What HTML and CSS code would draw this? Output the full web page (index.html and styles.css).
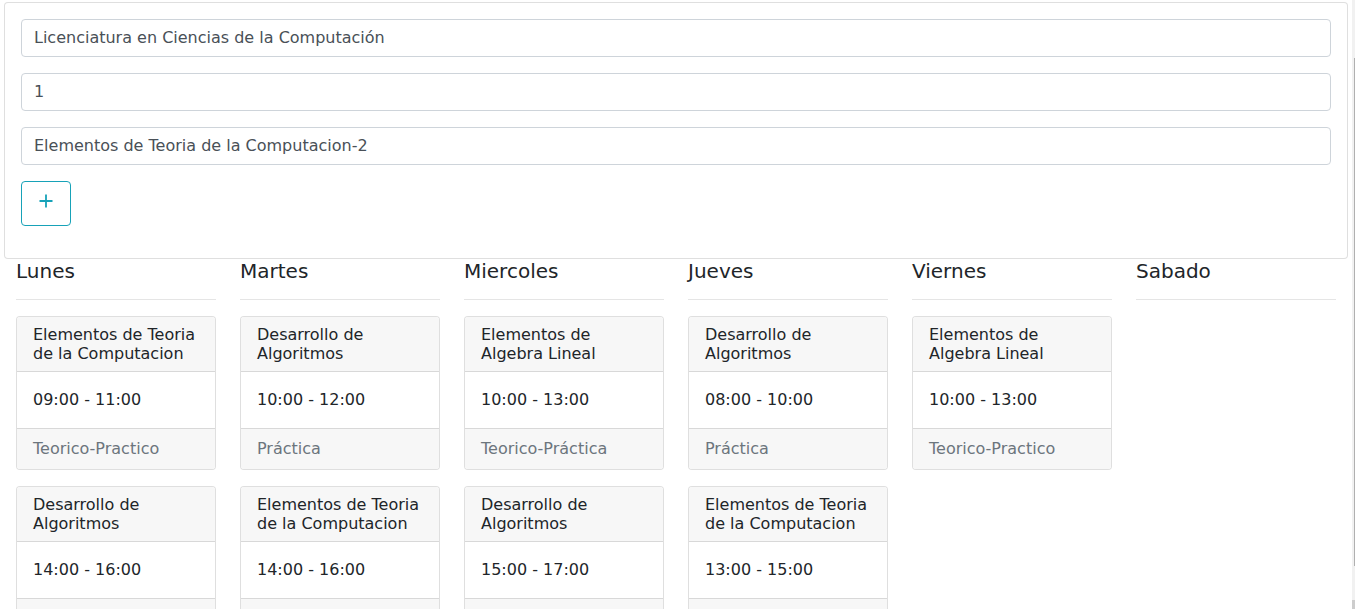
FILE: index.html
```html
<!DOCTYPE html>
<html lang="es">
<head>
<meta charset="utf-8">
<title>Horarios</title>
<link rel="stylesheet" href="styles.css">
</head>
<body>
<div class="page">
  <form class="form-card">
    <input class="field" type="text" value="Licenciatura en Ciencias de la Computación">
    <input class="field" type="text" value="1">
    <input class="field" type="text" value="Elementos de Teoria de la Computacion-2">
    <button class="add-btn" type="button" aria-label="Agregar">
      <svg width="14" height="14" viewBox="0 0 14 14"><path d="M7 0.5V13.5M0.5 7H13.5" stroke="#17a2b8" stroke-width="1.8" fill="none"/></svg>
    </button>
  </form>

  <div class="week">
    <div class="day">
      <h5 class="day-title">Lunes</h5>
      <hr class="day-rule">
      <div class="event">
        <div class="event-head">Elementos de Teoria de la Computacion</div>
        <div class="event-body">09:00 - 11:00</div>
        <div class="event-foot">Teorico-Practico</div>
      </div>
      <div class="event">
        <div class="event-head">Desarrollo de Algoritmos</div>
        <div class="event-body">14:00 - 16:00</div>
        <div class="event-foot">Práctica</div>
      </div>
    </div>
    <div class="day">
      <h5 class="day-title">Martes</h5>
      <hr class="day-rule">
      <div class="event">
        <div class="event-head">Desarrollo de Algoritmos</div>
        <div class="event-body">10:00 - 12:00</div>
        <div class="event-foot">Práctica</div>
      </div>
      <div class="event">
        <div class="event-head">Elementos de Teoria de la Computacion</div>
        <div class="event-body">14:00 - 16:00</div>
        <div class="event-foot">Teorico-Practico</div>
      </div>
    </div>
    <div class="day">
      <h5 class="day-title">Miercoles</h5>
      <hr class="day-rule">
      <div class="event">
        <div class="event-head">Elementos de Algebra Lineal</div>
        <div class="event-body">10:00 - 13:00</div>
        <div class="event-foot">Teorico-Práctica</div>
      </div>
      <div class="event">
        <div class="event-head">Desarrollo de Algoritmos</div>
        <div class="event-body">15:00 - 17:00</div>
        <div class="event-foot">Práctica</div>
      </div>
    </div>
    <div class="day">
      <h5 class="day-title">Jueves</h5>
      <hr class="day-rule">
      <div class="event">
        <div class="event-head">Desarrollo de Algoritmos</div>
        <div class="event-body">08:00 - 10:00</div>
        <div class="event-foot">Práctica</div>
      </div>
      <div class="event">
        <div class="event-head">Elementos de Teoria de la Computacion</div>
        <div class="event-body">13:00 - 15:00</div>
        <div class="event-foot">Teorico-Practico</div>
      </div>
    </div>
    <div class="day">
      <h5 class="day-title">Viernes</h5>
      <hr class="day-rule">
      <div class="event">
        <div class="event-head">Elementos de Algebra Lineal</div>
        <div class="event-body">10:00 - 13:00</div>
        <div class="event-foot">Teorico-Practico</div>
      </div>
    </div>
    <div class="day">
      <h5 class="day-title">Sabado</h5>
      <hr class="day-rule">
    </div>
  </div>
</div>
<div class="scrollbar"><div class="scroll-thumb"></div><div class="scroll-btn"></div></div>
</body>
</html>
```

FILE: styles.css
```css
* { box-sizing: border-box; }

html, body {
  margin: 0;
  padding: 0;
  background: #fff;
  overflow: hidden;
}

body {
  font-family: "DejaVu Sans", sans-serif;
  font-size: 16px;
  line-height: 1.5;
  color: #212529;
}

.page {
  width: 1355px;
  padding: 2px 7px 0 4px;
}

.form-card {
  display: flex;
  flex-direction: column;
  align-items: flex-start;
  margin: 0;
  padding: 16px;
  border: 1px solid rgba(0, 0, 0, 0.125);
  border-radius: 4px;
  background: #fff;
}

.field {
  display: block;
  width: 100%;
  height: 38px;
  margin: 0 0 16px 0;
  padding: 5px 12px 7px 12px;
  font-family: "DejaVu Sans", sans-serif;
  font-size: 16px;
  line-height: 24px;
  color: #495057;
  background: #fff;
  border: 1px solid #ced4da;
  border-radius: 4px;
  outline: none;
}

.add-btn {
  display: flex;
  align-items: flex-start;
  justify-content: center;
  width: 50px;
  height: 45px;
  margin: 0 0 16px 0;
  padding: 12px 0 0 0;
  background: #fff;
  border: 1px solid #17a2b8;
  border-radius: 4px;
  cursor: pointer;
}

.week {
  display: grid;
  grid-template-columns: repeat(6, 224px);
}

.day {
  padding: 0 12px;
}

.day-title {
  margin: 0 0 8px 0;
  font-size: 20px;
  line-height: 24px;
  font-weight: 400;
  color: #212529;
}

.day-rule {
  margin: 16px 0;
  border: 0;
  border-top: 1px solid rgba(0, 0, 0, 0.1);
  height: 0;
}

.event {
  margin-bottom: 16px;
  border: 1px solid rgba(0, 0, 0, 0.125);
  border-radius: 4px;
  background: #fff;
  overflow: hidden;
}

.event-head {
  padding: 8px 16px;
  font-size: 16px;
  line-height: 19px;
  background: #f7f7f7;
  border-bottom: 1px solid rgba(0, 0, 0, 0.125);
}

.event-body {
  padding: 16px;
  line-height: 24px;
}

.event-foot {
  padding: 8px 16px;
  line-height: 24px;
  color: #6c757d;
  background: #f7f7f7;
  border-top: 1px solid rgba(0, 0, 0, 0.125);
}

.scrollbar {
  position: fixed;
  top: 0;
  left: 1352px;
  width: 3px;
  height: 609px;
  background: #f1f1f1;
}

.scroll-thumb {
  position: absolute;
  top: 58px;
  left: 2px;
  width: 1px;
  height: 508px;
  background: #b0b0b0;
}

.scroll-btn {
  position: absolute;
  bottom: 0;
  left: 0;
  width: 3px;
  height: 9px;
  background: #cdcdcd;
}
```
